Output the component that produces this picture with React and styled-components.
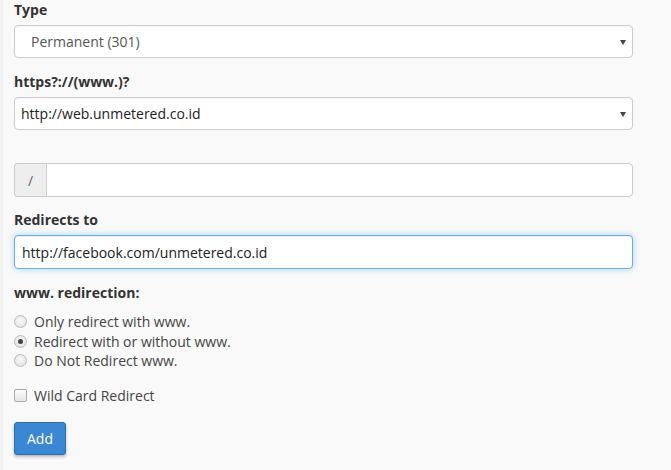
import React from 'react'
import styled, { createGlobalStyle } from 'styled-components'

const Global = createGlobalStyle`
  html, body {
    margin: 0;
    padding: 0;
    background: #f9f9f9;
  }
  body {
    font-family: "Open Sans", "DejaVu Sans", sans-serif;
    font-size: 14px;
    color: #333;
  }
`;

const Page = styled.div`
  min-height: 470px;
  border-left: 3px solid #f2f2f2;
  padding: 0 38px 0 11px;
  box-sizing: border-box;
`;

const Form = styled.form`
  display: flex;
  flex-direction: column;
  width: 619px;
`;

const Label = styled.label`
  display: block;
  font-weight: 700;
  line-height: 20px;
  height: 20px;
  margin: ${({ top }) => top || 0}px 0 5px;
  color: #333;
`;

const SelectBox = styled.div`
  position: relative;
  height: 33px;
  box-sizing: border-box;
  border: 1px solid #ccc;
  border-radius: 4px;
  background: #fff;
  display: flex;
  align-items: center;
  padding-left: ${({ indent }) => indent}px;
  color: ${({ muted }) => (muted ? '#555' : '#222')};
  box-shadow: inset 0 1px 1px rgba(0, 0, 0, 0.04);

  &::after {
    content: '';
    position: absolute;
    right: 6px;
    top: 14px;
    border-left: 3px solid transparent;
    border-right: 3px solid transparent;
    border-top: 5px solid #444;
  }
`;

const Group = styled.div`
  display: flex;
  height: 34px;
  margin-top: ${({ top }) => top}px;
  box-sizing: border-box;
`;

const Addon = styled.span`
  width: 32px;
  box-sizing: border-box;
  display: flex;
  align-items: center;
  justify-content: center;
  background: #eee;
  border: 1px solid #ccc;
  border-right: none;
  border-radius: 4px 0 0 4px;
  color: #666;
`;

const GroupField = styled.div`
  flex: 1;
  background: #fff;
  border: 1px solid #ccc;
  border-radius: 0 4px 4px 0;
`;

const TextField = styled.div`
  height: 34px;
  box-sizing: border-box;
  display: flex;
  align-items: center;
  padding-left: 7px;
  background: #fff;
  border: 1px solid #66afe9;
  border-radius: 4px;
  color: #222;
  box-shadow: inset 0 1px 1px rgba(0, 0, 0, 0.075), 0 0 6px rgba(102, 175, 233, 0.5);
`;

const Options = styled.div`
  display: flex;
  flex-direction: column;
  margin-top: ${({ top }) => top}px;
`;

const Option = styled.div`
  display: flex;
  align-items: center;
  gap: 7px;
  height: 19.5px;
  color: #444;
`;

const Radio = styled.span`
  width: 11px;
  height: 11px;
  border-radius: 50%;
  border: 1px solid #bbb;
  background: radial-gradient(circle at 50% 40%, #fafafa, #dcdcdc);
  position: relative;
  flex-shrink: 0;

  &::after {
    content: '';
    display: ${({ checked }) => (checked ? 'block' : 'none')};
    position: absolute;
    left: 3px;
    top: 3px;
    width: 5px;
    height: 5px;
    border-radius: 50%;
    background: #444;
  }
`;

const Check = styled.span`
  width: 11px;
  height: 11px;
  border-radius: 2px;
  border: 1px solid #aaa;
  background: linear-gradient(#fdfdfd, #e4e4e4);
  flex-shrink: 0;
`;

const Button = styled.button`
  margin-top: 17px;
  align-self: flex-start;
  width: 52px;
  height: 33px;
  border: 1px solid #2c6db0;
  border-radius: 3px;
  background: #3a87d4;
  color: #fff;
  font-family: "Open Sans", "DejaVu Sans", sans-serif;
  font-size: 14px;
  padding: 0;
  box-shadow: 0 2px 3px rgba(0, 0, 0, 0.25);
`;

export default function App() {
  return (
    <Page>
      <Global />
      <Form>
        <Label>Type</Label>
        <SelectBox indent={16} muted>Permanent (301)</SelectBox>

        <Label top={14}>https?://(www.)?</Label>
        <SelectBox indent={6}>http://web.unmetered.co.id</SelectBox>

        <Group top={33}>
          <Addon>/</Addon>
          <GroupField />
        </Group>

        <Label top={13}>Redirects to</Label>
        <TextField>http://facebook.com/unmetered.co.id</TextField>

        <Label top={14}>www. redirection:</Label>
        <Options top={4}>
          <Option><Radio />Only redirect with www.</Option>
          <Option><Radio checked />Redirect with or without www.</Option>
          <Option><Radio />Do Not Redirect www.</Option>
        </Options>

        <Options top={15}>
          <Option><Check />Wild Card Redirect</Option>
        </Options>

        <Button type="button">Add</Button>
      </Form>
    </Page>
  )
}
